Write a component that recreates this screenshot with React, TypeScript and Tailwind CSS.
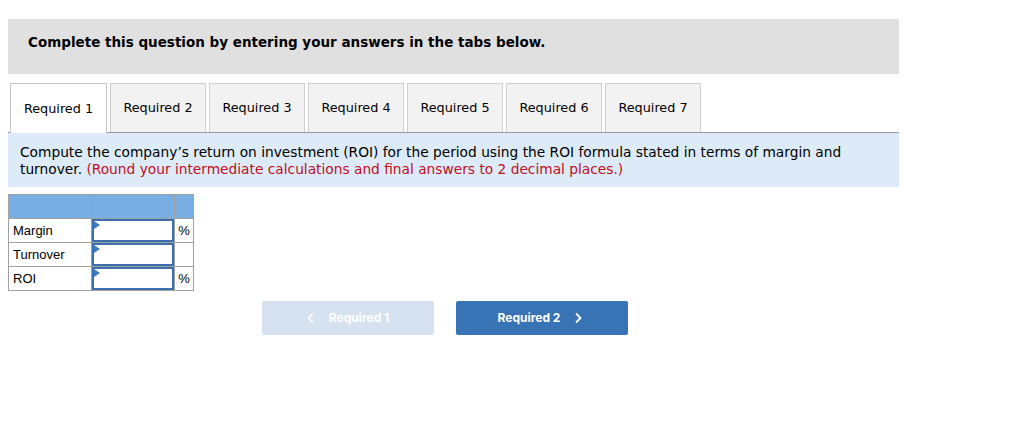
const tabs = ["Required 1", "Required 2", "Required 3", "Required 4", "Required 5", "Required 6", "Required 7"];

const rows = [
  { label: "Margin", unit: "%" },
  { label: "Turnover", unit: "" },
  { label: "ROI", unit: "%" },
];

export default function App() {
  return (
    <div className="w-[1024px] h-[433px] bg-white pt-[19px] pl-[8px] font-['DejaVu_Sans',Verdana,sans-serif] text-black">
      <div className="w-[891px] h-[55px] bg-[#e0e0e0] flex items-center pl-[20px] pb-[9px]">
        <span className="font-bold text-[13.5px]">Complete this question by entering your answers in the tabs below.</span>
      </div>

      <div className="w-[891px] mt-[9px] flex gap-[3px] pl-[2px] border-b border-[#9c9c9c]">
        {tabs.map((t, i) => (
          <div
            key={t}
            className={
              i === 0
                ? "w-[97px] h-[50px] -mb-px bg-white border border-b-0 border-[#c4c4c4] flex items-center justify-center text-[12.8px]"
                : "w-[96px] h-[49px] bg-[#f2f2f2] border border-b-0 border-[#cfcfcf] flex items-center justify-center text-[12.8px]"
            }
          >
            {t}
          </div>
        ))}
      </div>

      <div className="w-[891px] h-[54px] bg-[#dcebf7] px-[12px] pt-[11px] text-[13.75px] leading-[17px]">
        <span>
          Compute the company’s return on investment (ROI) for the period using the ROI formula stated in terms of margin and turnover.
        </span>{" "}
        <span className="text-[#c00d1e]">(Round your intermediate calculations and final answers to 2 decimal places.)</span>
      </div>

      <table className="mt-[7px] border-collapse font-['Liberation_Sans',Arial,sans-serif] text-[13px]">
        <tbody>
          <tr className="h-[24px] bg-[#79aee3]">
            <td className="w-[83px] border border-[#a0a0a0]"></td>
            <td className="w-[83px] border border-[#a0a0a0]"></td>
            <td className="w-[19px] border border-[#a0a0a0]"></td>
          </tr>
          {rows.map((r) => (
            <tr key={r.label} className="h-[24px]">
              <td className="border border-[#a0a0a0] pl-[4px] pt-px">{r.label}</td>
              <td className="border border-[#a0a0a0] p-0">
                <div className="relative h-[23px] border-2 border-[#3c6fae] bg-white">
                  <svg className="absolute left-0 top-0" width="6" height="8" viewBox="0 0 6 8">
                    <polygon points="0,0 6,4 0,8" fill="#3c78c8" />
                  </svg>
                </div>
              </td>
              <td className="border border-[#a0a0a0] text-center">{r.unit}</td>
            </tr>
          ))}
        </tbody>
      </table>

      <div className="mt-[10px] flex gap-[22px] pl-[254px] font-['Inter',sans-serif]">
        <div className="w-[172px] h-[34px] rounded-[2px] bg-[#d6e2f0] flex items-center justify-center gap-[14px] text-white text-[12px] font-bold">
          <svg width="8" height="12" viewBox="0 0 8 12" fill="none" stroke="white" strokeWidth="1.5">
            <polyline points="6,1.5 1.5,6 6,10.5" />
          </svg>
          <span>Required 1</span>
        </div>
        <div className="w-[172px] h-[34px] rounded-[2px] bg-[#3873b5] flex items-center justify-center gap-[14px] text-white text-[12px] font-bold pr-[4px]">
          <span>Required 2</span>
          <svg width="8" height="12" viewBox="0 0 8 12" fill="none" stroke="white" strokeWidth="1.8">
            <polyline points="2,1.5 6.5,6 2,10.5" />
          </svg>
        </div>
      </div>
    </div>
  );
}
